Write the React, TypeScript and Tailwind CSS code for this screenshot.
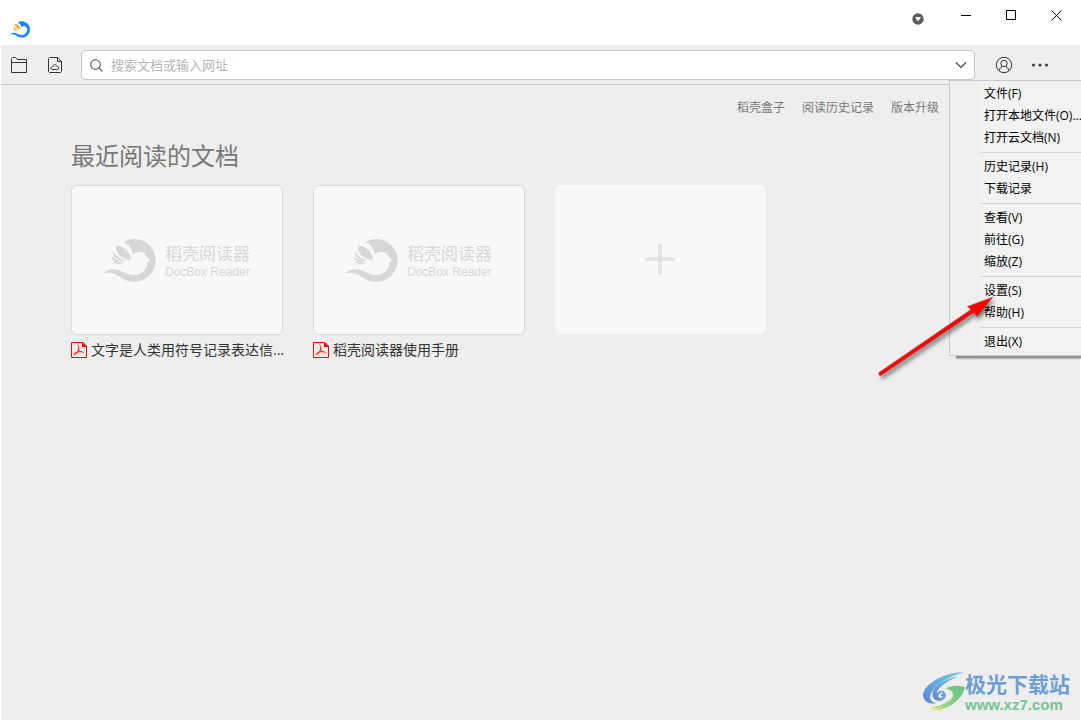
import React from "react";

const menuGroups = [
  ["文件(F)", "打开本地文件(O)...", "打开云文档(N)"],
  ["历史记录(H)", "下载记录"],
  ["查看(V)", "前往(G)", "缩放(Z)"],
  ["设置(S)", "帮助(H)"],
  ["退出(X)"],
];

const links = ["稻壳盒子", "阅读历史记录", "版本升级"];

const docs = ["文字是人类用符号记录表达信...", "稻壳阅读器使用手册"];

const Bird: React.FC<{ className: string; body: string; wing: string }> = ({ className, body, wing }) => (
  <svg viewBox="38 42 158 130" className={className} aria-hidden="true">
    <path
      fill={body}
      d="M99 51C108 45 119 42 131 42C167 42 196 71 196 107C196 143 167 171 131 171C111 171 98 163 86 155C70 144 55 142 38 146C49 136 60 132 76 134C98 137 112 152 132 151C155 150 169 134 172 114L178 104L168 95C166 85 158 81 147 81C138 81 132 84 128 89C124 70 114 57 99 51Z"
    />
    <path fill={wing} d="M76 62C98 64 122 80 121 105C100 104 74 92 76 62Z" />
    <path fill={wing} d="M69 78C73 92 86 102 106 108C84 109 62 98 69 78Z" />
    <path fill={wing} d="M62 94C72 103 85 109 101 111C83 116 65 111 62 94Z" />
    <path fill={wing} d="M66 109C76 114 88 115 98 114C88 121 74 120 66 109Z" />
  </svg>
);

const FolderIcon: React.FC = () => (
  <svg width="18" height="18" viewBox="0 0 18 18" fill="none" stroke="#333" aria-hidden="true">
    <path d="M1.500 16.500V2.500L2.500 1.500H5.500L7.500 3.500H16.500V16.500ZM1.500 6.500H16.500" />
  </svg>
);

const CloudDocIcon: React.FC = () => (
  <svg width="18" height="18" viewBox="0 0 18 18" fill="none" stroke="#333" aria-hidden="true">
    <path d="M11.500 1.500H3.500L2.500 2.500V15.500L3.500 16.500H14.500L15.500 15.500V5.500ZM11.500 1.500V5.500H15.500" />
    <path d="M6.500 13.500C4.500 13.500 4.500 10.800 6.700 10.600C7 8.200 10.500 8.200 11 10.300C13.300 10.300 13.300 13.500 11.300 13.500Z" />
  </svg>
);

const PdfIcon: React.FC = () => (
  <svg width="16" height="16" viewBox="0 0 16 16" fill="none" stroke="#f00" className="shrink-0" aria-hidden="true">
    <path d="M.5 .5H12L15.500 4V15.500H.5Z" />
    <path d="M11 0L16 5H11Z" fill="#f00" stroke="none" />
    <path d="M6.500 3C8.200 3.200 8 6 7.300 8C6.300 10.500 4.500 13 3 12.500M3 12.500C3.500 11 6 9.800 9 9.600C11 9.500 12 10 12.800 10.800M7.300 6C7.600 8 9 9.500 10.500 10.200" strokeWidth=".9" />
  </svg>
);

const TitleBar: React.FC = () => (
  <header className="flex h-[45px] justify-between bg-white pr-0.5">
    <Bird className="mt-[21px] ml-[10px] h-[17px] w-[20px]" body="#1684fc" wing="#e8b440" />
    <div className="flex h-[30px] items-center">
      <button aria-label="下拉" className="mt-[7px] mr-[11px] flex w-[30px] justify-center">
        <svg width="12" height="12" viewBox="0 0 12 12">
          <circle cx="6" cy="6" r="5.700" fill="#5b5b5b" />
          <path d="M3 4H9L6 8.500Z" fill="#fff" />
        </svg>
      </button>
      <button aria-label="最小化" className="flex w-[45px] justify-center">
        <svg width="11" height="11" viewBox="0 0 11 11" stroke="#000">
          <path d="M0 5.500H10" />
        </svg>
      </button>
      <button aria-label="最大化" className="flex w-[45px] justify-center">
        <svg width="11" height="11" viewBox="0 0 11 11" stroke="#000" fill="none">
          <path d="M.5 .5H9.500V9.500H.5Z" />
        </svg>
      </button>
      <button aria-label="关闭" className="flex w-[45px] justify-center">
        <svg width="11" height="11" viewBox="0 0 11 11" stroke="#000">
          <path d="M.5 .5L10.500 10.500M10.500 .5L.5 10.500" />
        </svg>
      </button>
    </div>
  </header>
);

const Toolbar: React.FC = () => (
  <div className="flex h-10 items-center border-b border-[#c8c8c8] pr-[31px] pl-[9px]">
    <button aria-label="打开本地文件">
      <FolderIcon />
    </button>
    <button aria-label="打开云文档" className="ml-[18px]">
      <CloudDocIcon />
    </button>
    <label className="ml-[17px] flex h-[30px] flex-1 items-center rounded border border-[#c8c8c8] bg-white px-[7px]">
      <svg width="14" height="14" viewBox="0 0 14 14" fill="none" stroke="#666" strokeWidth="1.200" aria-hidden="true">
        <circle cx="6.500" cy="6.500" r="4.800" />
        <path d="M10 10L13.500 13.500" />
      </svg>
      <input
        aria-label="搜索文档或输入网址"
        placeholder="搜索文档或输入网址"
        className="ml-2 flex-1 bg-transparent text-[13px] leading-5 outline-none placeholder:text-[#b4b4b4]"
      />
      <button aria-label="展开">
        <svg width="12" height="8" viewBox="0 0 12 8" fill="none" stroke="#444" strokeWidth="1.200">
          <path d="M1 1.500L6 6.500L11 1.500" />
        </svg>
      </button>
    </label>
    <button aria-label="账户" className="ml-5">
      <svg width="18" height="18" viewBox="0 0 18 18" fill="none" stroke="#333">
        <circle cx="9" cy="9" r="7.700" />
        <circle cx="9" cy="7.500" r="3.200" />
        <path d="M4.500 14.500C4.500 12.500 5.500 11.500 7 10.500M13.500 14.500C13.500 12.500 12.500 11.500 11 10.500" />
      </svg>
    </button>
    <button aria-label="更多" className="ml-[18px]">
      <svg width="18" height="18" viewBox="0 0 18 18" fill="#333">
        <circle cx="2.500" cy="9" r="1.500" />
        <circle cx="9" cy="9" r="1.500" />
        <circle cx="15.500" cy="9" r="1.500" />
      </svg>
    </button>
  </div>
);

const MainMenu: React.FC = () => (
  <nav className="absolute top-20 right-0 w-[132px] overflow-hidden border border-r-0 border-[#c8c8c8] bg-linear-to-r from-[#f0f0f0] from-[30px] to-[#f2f2f2] to-[30px] py-0.5 pl-[30px] text-xs text-black">
    {menuGroups.map((group, i) => (
      <div key={group[0]}>
        {i > 0 && <div className="my-[3px] h-px bg-[#d4d4d4]" />}
        {group.map((item) => (
          <button key={item} className="block h-[22px] w-full pl-1 text-left leading-[22px] whitespace-nowrap">
            {item}
          </button>
        ))}
      </div>
    ))}
  </nav>
);

const Arrow: React.FC = () => (
  <svg width="130" height="96" viewBox="0 0 130 96" className="pointer-events-none absolute top-[290px] right-[81px] drop-shadow-[2px_3px_2px_rgba(0,0,0,0.5)]" aria-hidden="true">
    <path
      d="M9 82.500L101 19.500L97.500 16.500L123 7L107 26.500L104 22.500L11 85.500Q8 86 9 82.500Z"
      fill="#f00"
      stroke="#a05050"
      strokeWidth=".5"
    />
  </svg>
);

const Watermark: React.FC = () => (
  <div className="absolute right-[11px] bottom-[7px] flex items-start">
    <svg width="42" height="40" viewBox="20 17 126 120" aria-hidden="true">
      <defs>
        <linearGradient id="wave-blue" x1="0" y1="1" x2="1" y2="0">
          <stop offset="0" stopColor="#5c83cf" />
          <stop offset=".6" stopColor="#69b5e4" />
          <stop offset="1" stopColor="#7fbfe4" />
        </linearGradient>
        <linearGradient id="wave-green" x1="0" y1="1" x2="1" y2="0">
          <stop offset="0" stopColor="#f0e94f" />
          <stop offset=".4" stopColor="#8bd27c" />
          <stop offset="1" stopColor="#6cc187" />
        </linearGradient>
      </defs>
      <path fill="url(#wave-blue)" d="M143 19C98 14 23 48 20 86C20 104 38 115 60 111C45 107 38 98 43 84C54 56 95 30 143 19Z" />
      <path fill="url(#wave-blue)" d="M126 30C86 36 48 62 48 85C49 99 63 107 77 102C88 97 92 86 85 77C78 70 65 73 61 83C60 68 92 44 126 30Z" />
      <path fill="#eee" d="M82 80C74 76 65 83 67 92C71 97 78 96 81 90C76 92 72 89 74 85C76 81 79 80 82 80Z" />
      <path fill="url(#wave-green)" d="M88 67C104 56 132 57 145 63C141 98 98 132 34 137C74 128 108 108 110 87C111 75 101 69 88 67Z" />
      <path fill="url(#wave-green)" d="M107 91C97 112 66 119 34 127C61 130 96 120 107 91Z" />
    </svg>
    <div className="flex flex-col">
      <span className="text-[21px] leading-6 font-bold text-[#6b9fd4]">极光下载站</span>
      <span className="font-['Liberation_Sans',sans-serif] text-[15px] leading-[18px] font-bold text-[#74c690]">www.xz7.com</span>
    </div>
  </div>
);

export default function App() {
  return (
    <div className="relative min-h-screen overflow-hidden bg-white font-['Open_Sans','Noto_Sans_CJK_SC',sans-serif]">
      <TitleBar />
      <div className="mx-px mb-px min-h-[calc(100vh-46px)] bg-[#eee]">
        <Toolbar />
        <main className="pt-[13px] pl-[70px]">
          <div className="mr-[141px] flex justify-end gap-[17px] text-xs leading-5 text-[#777]">
            {links.map((link) => (
              <a key={link} href="#">
                {link}
              </a>
            ))}
          </div>
          <h1 className="mt-[19px] text-2xl leading-[38px] text-[#777]">最近阅读的文档</h1>
          <div className="mt-[10px] flex flex-wrap gap-[30px]">
            {docs.map((doc) => (
              <a key={doc} href="#" className="w-[212px]">
                <div className="flex h-[150px] items-center rounded-md border border-[#d9d9d9] bg-[#f8f8f8] pl-[31px]">
                  <Bird className="h-[43px] w-[53px]" body="#d7d7d7" wing="#d7d7d7" />
                  <div className="mt-1 ml-[9px] flex flex-col text-[#d7d7d7]">
                    <span className="text-[17px] leading-5">稻壳阅读器</span>
                    <span className="font-['Liberation_Sans',sans-serif] text-xs leading-4">DocBox Reader</span>
                  </div>
                </div>
                <div className="mt-[5px] flex items-center gap-1 text-sm text-[#333]">
                  <PdfIcon />
                  <span className="whitespace-nowrap">{doc}</span>
                </div>
              </a>
            ))}
            <button aria-label="添加文档" className="flex h-[149px] w-[211px] items-center justify-center rounded-md bg-[#f8f8f8] pr-0.5 pb-0.5">
              <svg width="30" height="30" viewBox="0 0 30 30" fill="#e6e2e2">
                <path d="M13 0H17V13H30V17H17V30H13V17H0V13H13Z" />
              </svg>
            </button>
          </div>
        </main>
      </div>
      <MainMenu />
      <div className="absolute top-[356px] right-0 h-0.5 w-[125px] bg-[#909090] shadow-[0_1px_2px_#aaa]" />
      <Arrow />
      <Watermark />
    </div>
  );
}
